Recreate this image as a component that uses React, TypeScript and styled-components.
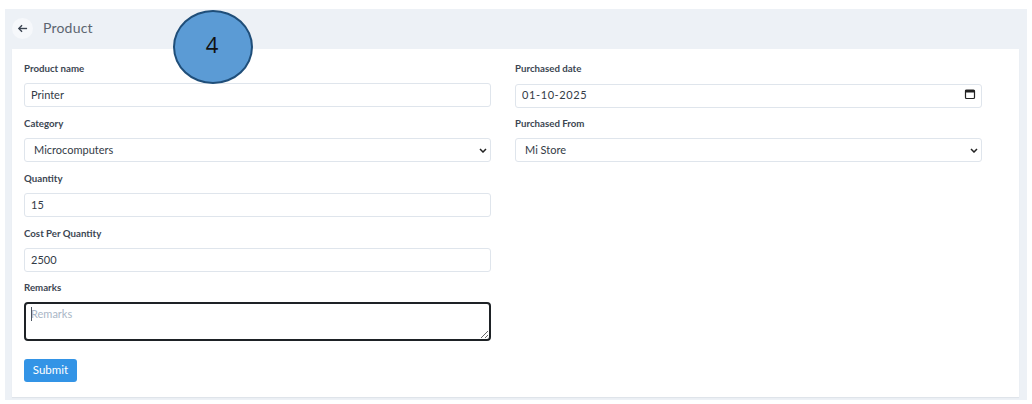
import React from 'react';
import styled, { createGlobalStyle } from 'styled-components';

const GlobalStyle = createGlobalStyle`
  html, body {
    margin: 0;
    padding: 0;
    background: #ffffff;
    overflow: hidden;
  }
  * {
    box-sizing: border-box;
  }
`;

const chevron = encodeURIComponent(
  '<svg xmlns="http://www.w3.org/2000/svg" width="8" height="5" viewBox="0 0 8 5"><path d="M1 1l3 3 3-3" fill="none" stroke="#222" stroke-width="1.5"/></svg>'
);

const Page = styled.div`
  position: relative;
  width: 1032px;
  height: 404px;
  padding: 9px 5px 4px;
  font-family: Lato, "Noto Sans", sans-serif;
`;

const Shell = styled.div`
  height: 100%;
  display: flex;
  flex-direction: column;
  background: #edf1f6;
  padding: 0 8px 3px 7px;
`;

const Header = styled.div`
  height: 40px;
  display: flex;
  align-items: center;
  gap: 10px;
  padding-bottom: 1px;
`;

const BackButton = styled.button`
  width: 21px;
  height: 21px;
  padding: 0;
  border: 0;
  border-radius: 50%;
  background: #f6f8fb;
  color: #3a4350;
  display: flex;
  align-items: center;
  justify-content: center;
`;

const Title = styled.h1`
  margin: 0 0 2px;
  font-size: 14px;
  font-weight: 400;
  letter-spacing: 0.2px;
  color: #5c6570;
`;

const Card = styled.form`
  flex: 1;
  background: #ffffff;
  box-shadow: 0 1px 1px #dfe4ea;
  padding: 12px 37px 0 12px;
  display: grid;
  grid-template-columns: 467px 467px;
  column-gap: 24px;
  align-content: start;
`;

const Column = styled.div`
  display: flex;
  flex-direction: column;
`;

const Field = styled.div<{ $height: number }>`
  height: ${(p) => p.$height}px;
  display: flex;
  flex-direction: column;
`;

const Label = styled.label`
  height: 22px;
  font-size: 9.7px;
  font-weight: 700;
  line-height: 14px;
  color: #3c4652;
`;

const controlStyles = `
  width: 100%;
  height: 24px;
  border: 1px solid #dfe5ec;
  border-radius: 3px;
  background: #ffffff;
  font-family: Lato, "Noto Sans", sans-serif;
  font-size: 11px;
  color: #333b46;
  outline: none;
`;

const Input = styled.input<{ $spaced?: boolean }>`
  ${controlStyles}
  padding: 0 6px 2px;
  letter-spacing: ${(p) => (p.$spaced ? '0.6px' : 'normal')};
`;

const Select = styled.select`
  ${controlStyles}
  appearance: none;
  padding: 0 9px 2px;
  background-image: url("data:image/svg+xml,${chevron}");
  background-repeat: no-repeat;
  background-position: right 3px center;
`;

const InputWrap = styled.div`
  position: relative;
`;

const CalendarIcon = styled.svg`
  position: absolute;
  right: 6px;
  top: 5px;
  width: 12px;
  height: 12px;
`;

const AreaWrap = styled.div`
  position: relative;
  height: 39px;
`;

const TextArea = styled.textarea`
  display: block;
  width: 100%;
  height: 39px;
  padding: 2px 5px;
  border: 2px solid #1e2226;
  border-radius: 4px;
  background: #ffffff;
  font-family: Lato, "Noto Sans", sans-serif;
  font-size: 11px;
  line-height: 16px;
  color: #3d4652;
  outline: none;
  &::placeholder {
    color: #a9b6c6;
    opacity: 1;
  }
`;

const Caret = styled.span`
  position: absolute;
  left: 7px;
  top: 5px;
  width: 1px;
  height: 14px;
  background: #4b5560;
`;

const SubmitButton = styled.button`
  width: 53px;
  height: 23px;
  margin-top: 18px;
  padding: 0 0 2px;
  border: 0;
  border-radius: 3px;
  background: #3394e6;
  color: #ffffff;
  font-family: Lato, "Noto Sans", sans-serif;
  font-size: 11.5px;
`;

const Callout = styled.div`
  position: absolute;
  left: 173px;
  top: 10px;
  width: 80px;
  height: 74px;
  border: 2px solid #1f4e79;
  border-radius: 50%;
  background: #5b9bd5;
  color: #111111;
  display: flex;
  align-items: center;
  justify-content: center;
  padding: 0 2px 7px 0;
  font-family: "Open Sans", sans-serif;
  font-size: 22px;
`;

export default function App() {
  return (
    <>
      <GlobalStyle />
      <Page>
        <Shell>
          <Header>
            <BackButton type="button" aria-label="Back">
              <svg width="11" height="11" viewBox="0 0 12 12" fill="none" stroke="currentColor" strokeWidth="1.5">
                <path d="M11 6H2" />
                <path d="M5.5 2.5 2 6l3.5 3.5" />
              </svg>
            </BackButton>
            <Title>Product</Title>
          </Header>
          <Card onSubmit={(e) => e.preventDefault()}>
            <Column>
              <Field $height={55}>
                <Label>Product name</Label>
                <Input defaultValue="Printer" />
              </Field>
              <Field $height={55}>
                <Label>Category</Label>
                <Select defaultValue="Microcomputers">
                  <option>Microcomputers</option>
                </Select>
              </Field>
              <Field $height={55}>
                <Label>Quantity</Label>
                <Input defaultValue="15" />
              </Field>
              <Field $height={54}>
                <Label>Cost Per Quantity</Label>
                <Input defaultValue="2500" />
              </Field>
              <Field $height={61}>
                <Label>Remarks</Label>
                <AreaWrap>
                  <TextArea placeholder="Remarks" />
                  <Caret />
                </AreaWrap>
              </Field>
              <SubmitButton type="submit">Submit</SubmitButton>
            </Column>
            <Column>
              <Field $height={55}>
                <Label>Purchased date</Label>
                <InputWrap>
                  <Input $spaced defaultValue="01-10-2025" />
                  <CalendarIcon viewBox="0 0 12 12">
                    <rect x="1.5" y="2" width="9" height="8.5" rx="1" fill="none" stroke="#222" strokeWidth="1.2" />
                    <rect x="1.5" y="2" width="9" height="2.5" fill="#222" />
                  </CalendarIcon>
                </InputWrap>
              </Field>
              <Field $height={55}>
                <Label>Purchased From</Label>
                <Select defaultValue="Mi Store">
                  <option>Mi Store</option>
                </Select>
              </Field>
            </Column>
          </Card>
        </Shell>
        <Callout>4</Callout>
      </Page>
    </>
  );
}
